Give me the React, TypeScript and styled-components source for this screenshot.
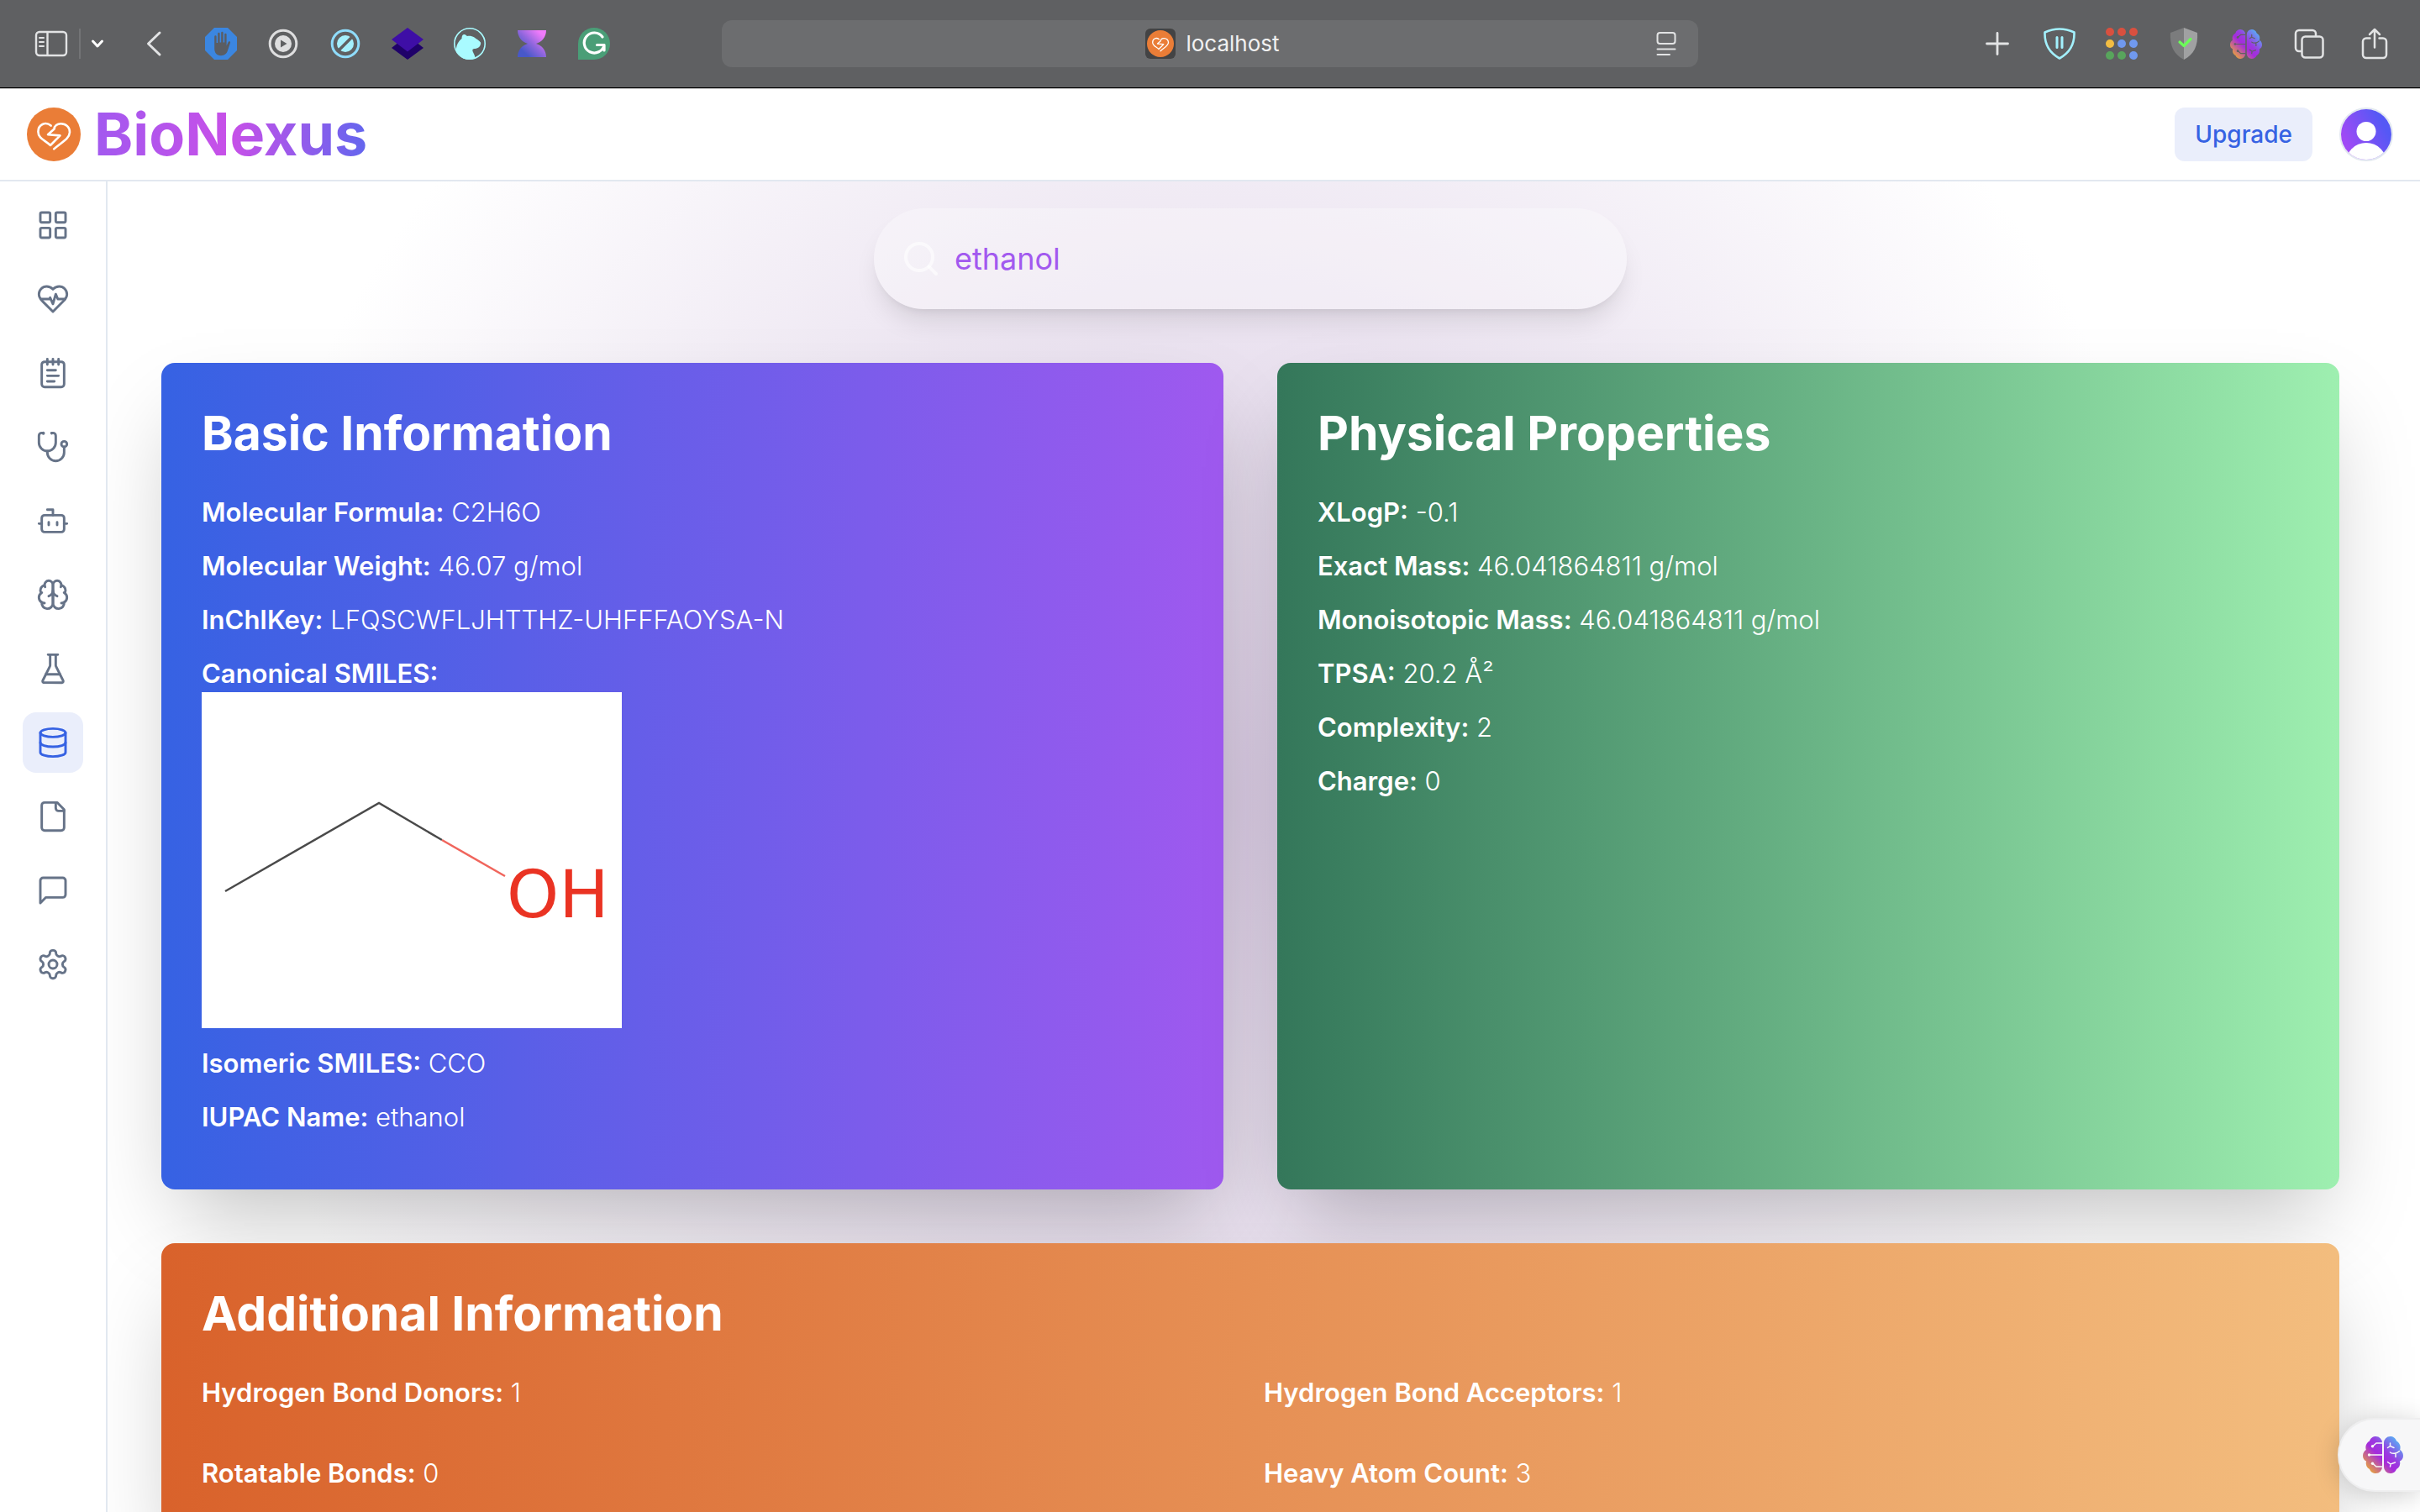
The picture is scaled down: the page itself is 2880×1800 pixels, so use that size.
import React from "react";
import styled, { createGlobalStyle } from "styled-components";

const GlobalStyle = createGlobalStyle`
  *, *::before, *::after { box-sizing: border-box; }
  html, body { margin: 0; padding: 0; }
  body {
    background: #ffffff;
    font-family: Inter, "Liberation Sans", sans-serif;
    -webkit-font-smoothing: antialiased;
  }
  button { font: inherit; border: 0; padding: 0; background: none; color: inherit; cursor: pointer; }
  svg { display: block; }
`;

const Shell = styled.div`
  display: flex;
  flex-direction: column;
  height: 100vh;
  overflow: hidden;
`;

/* ---------- browser chrome ---------- */

const BrowserBar = styled.div`
  display: grid;
  grid-template-columns: 1fr minmax(0, 1162px) 1fr;
  align-items: center;
  flex: none;
  height: 105px;
  padding: 0 32px;
  background: #5f6062;
  border-bottom: 1px solid #000000;
  color: #e2e3e4;
`;

const ToolGroup = styled.div<{ $end?: boolean }>`
  display: flex;
  align-items: center;
  justify-content: ${(p) => (p.$end ? "flex-end" : "flex-start")};
`;

const ExtensionRow = styled.div<{ $before?: number }>`
  display: flex;
  align-items: center;
  gap: 36px;
  margin-left: ${(p) => p.$before ?? 0}px;
`;

const ToolButton = styled.button<{ $width?: number; $before?: number }>`
  display: flex;
  align-items: center;
  justify-content: center;
  flex: none;
  width: ${(p) => p.$width ?? 38}px;
  height: 40px;
  margin-left: ${(p) => p.$before ?? 0}px;
`;

const ToolDivider = styled.span`
  width: 2px;
  height: 36px;
  margin: 0 12px;
  background: #737476;
`;

const AddressBar = styled.div`
  display: grid;
  grid-template-columns: 1fr auto 1fr;
  align-items: center;
  height: 56px;
  padding: 0 26px 0 32px;
  border-radius: 12px;
  background: #6c6d6f;
`;

const AddressText = styled.div`
  display: flex;
  align-items: center;
  grid-column: 2;
  gap: 12px;
  font-size: 26px;
  line-height: 32px;
  color: #f1f1f1;
`;

const Favicon = styled.span`
  display: flex;
  align-items: center;
  justify-content: center;
  width: 36px;
  height: 36px;
  border-radius: 6px;
  background: #434344;
`;

const ReaderButton = styled.button`
  justify-self: end;
`;

/* ---------- app header ---------- */

const Header = styled.header`
  display: flex;
  align-items: center;
  justify-content: space-between;
  flex: none;
  height: 111px;
  padding: 0 32px;
  background: #ffffff;
  border-top: 1px solid #c4c4c4;
  border-bottom: 2px solid #e2e8f0;
`;

const Brand = styled.a`
  display: flex;
  align-items: center;
  gap: 16px;
  text-decoration: none;
`;

const BrandName = styled.span`
  font-size: 70px;
  line-height: 80px;
  font-weight: 700;
  color: transparent;
  background: linear-gradient(to right, #a259ef, #c850e8 50%, #6366ee);
  -webkit-background-clip: text;
  background-clip: text;
`;

const Account = styled.div`
  display: flex;
  align-items: center;
  gap: 32px;
`;

const UpgradeButton = styled.button`
  height: 64px;
  padding: 0 24px;
  border-radius: 12px;
  background: #eaeefb;
  color: #3662e3;
  font-size: 28px;
  line-height: 40px;
  font-weight: 500;
`;

const AvatarButton = styled.button`
  width: 64px;
  height: 64px;
  border-radius: 50%;
`;

/* ---------- body ---------- */

const Body = styled.div`
  display: flex;
  flex: 1;
  min-height: 0;
`;

const Sidebar = styled.nav`
  display: flex;
  flex-direction: column;
  align-items: center;
  flex: none;
  gap: 16px;
  width: 128px;
  padding-top: 16px;
  background: #ffffff;
  border-right: 2px solid #e2e8f0;
`;

const NavLink = styled.a<{ $active?: boolean }>`
  display: flex;
  padding: 16px;
  border-radius: 16px;
  color: ${(p) => (p.$active ? "#3662e3" : "#667388")};
  background: ${(p) => (p.$active ? "#eaeefb" : "transparent")};
`;

const Main = styled.main`
  flex: 1;
  min-width: 0;
  overflow: hidden;
  padding: 32px 96px 0 64px;
  background: radial-gradient(circle 1180px at calc(50% - 64px) calc(50% - 56px), #d9cae3, #ffffff);
`;

const SearchBox = styled.label`
  display: flex;
  align-items: center;
  gap: 16px;
  max-width: 896px;
  height: 120px;
  margin: 0 auto 64px;
  padding: 0 32px;
  border-radius: 60px;
  background: rgba(255, 255, 255, 0.3);
  color: rgba(255, 255, 255, 0.6);
  box-shadow: 0 20px 30px -6px rgba(0, 0, 0, 0.1), 0 8px 12px -8px rgba(0, 0, 0, 0.1);
`;

const SearchInput = styled.input`
  flex: 1;
  min-width: 0;
  padding: 0;
  border: 0;
  outline: 0;
  background: transparent;
  font-family: inherit;
  font-size: 36px;
  line-height: 56px;
  color: #a259ef;
`;

const Cards = styled.div`
  display: grid;
  grid-template-columns: 1fr 1fr;
  gap: 64px;
`;

const Card = styled.section<{ $from: string; $to: string; $wide?: boolean }>`
  grid-column: ${(p) => (p.$wide ? "1 / -1" : "auto")};
  padding: 48px;
  border-radius: 16px;
  color: #ffffff;
  background: linear-gradient(to right, ${(p) => p.$from}, ${(p) => p.$to});
  box-shadow: 0 50px 100px -24px rgba(0, 0, 0, 0.25);
`;

const CardTitle = styled.h2`
  margin: 0 0 32px;
  font-size: 57px;
  line-height: 72px;
  font-weight: 700;
`;

const PropertyGrid = styled.div`
  display: grid;
  grid-template-columns: 1fr 1fr;
  gap: 32px;
`;

const Property = styled.div`
  margin-bottom: 12px;
  font-size: 31px;
  line-height: 52px;
  font-weight: 300;
`;

const PropertyLabel = styled.strong`
  font-weight: 600;
`;

const Structure = styled.svg`
  width: 500px;
  height: 400px;
  margin: -4px 0 16px;
  background: #ffffff;
  font-family: "DejaVu Sans", sans-serif;
  font-size: 79px;
  font-weight: 400;
`;

const AssistantButton = styled.button`
  position: fixed;
  right: 0;
  bottom: 24px;
  display: flex;
  align-items: center;
  width: 98px;
  height: 88px;
  padding-left: 28px;
  border: 2px solid #eeeeef;
  border-right: 0;
  border-radius: 44px 0 0 44px;
  background: #f7f7f8;
  box-shadow: 0 4px 30px rgba(0, 0, 0, 0.18);
`;

/* ---------- drawings ---------- */

const HeartMark = ({ size }: { size: number }) => (
  <svg width={size} height={size} viewBox="0 0 64 64" fill="none" aria-hidden="true">
    <circle cx="32" cy="32" r="32" fill="#ea7d37" />
    <path
      d="M28.6 21.6C22 16 13.4 20.5 13.4 28.8C13.4 36.8 21.5 38.8 28 45L39.5 33.4L25 32.2L32.6 25.6C32.6 22 36 19.2 40.5 19.2C46.5 19.2 51.2 23.5 51 29.5C50.6 37.5 40 42 32.2 49.4"
      stroke="#fff"
      strokeWidth="2.6"
      strokeLinecap="round"
      strokeLinejoin="round"
    />
  </svg>
);

const BrainMark = ({ id, width, height, trace }: { id: string; width: number; height: number; trace: string }) => (
  <svg width={width} height={height} viewBox="0 0 48 44" aria-hidden="true">
    <defs>
      <linearGradient id={id} gradientUnits="userSpaceOnUse" x1="6" y1="40" x2="42" y2="4">
        <stop offset="0" stopColor="#e8a33c" />
        <stop offset="0.42" stopColor="#a52bdc" />
        <stop offset="0.6" stopColor="#9a3be0" />
        <stop offset="1" stopColor="#57b0f5" />
      </linearGradient>
    </defs>
    <g fill={`url(#${id})`}>
      <path d="M15.5 0A7.5 7.5 0 0 1 23 7.5V36.5A7.5 7.5 0 0 1 15.5 44C12 44 9 42 8 39C5 37.5 3 34 4 29.5C1.5 28.5 0 26 0 23C0 20 1.5 17.5 3.8 16C2.5 11 4.5 7.5 8 5.5C9 2 12 0 15.5 0Z" />
      <path d="M32.5 0A7.5 7.5 0 0 0 25 7.5V36.5A7.5 7.5 0 0 0 32.5 44C36 44 39 42 40 39C43 37.5 45 34 44 29.5C46.5 28.5 48 26 48 23C48 20 46.5 17.5 44.2 16C45.5 11 43.5 7.5 40 5.5C39 2 36 0 32.5 0Z" />
    </g>
    <g fill="none" stroke={trace} strokeWidth="1.5" strokeLinecap="round">
      <path d="M23 8H16L12 11.5M23 22H8M23 36H16L12 32.5" />
      <path d="M32.5 8V11.5L29.5 13.5M32.5 11.5L37 13.5M32.5 19C35 21 40 21 43.5 17.5M39 21V24.5M29.5 30.5L33 33L38.5 31M33 33L32.5 36" />
    </g>
    <g fill={trace}>
      <circle cx="11.5" cy="11.8" r="1.7" />
      <circle cx="7.5" cy="22" r="1.7" />
      <circle cx="11.5" cy="32.3" r="1.7" />
    </g>
  </svg>
);

const NavIcon = ({ children }: { children: React.ReactNode }) => (
  <svg
    width="40"
    height="40"
    viewBox="0 0 24 24"
    fill="none"
    stroke="currentColor"
    strokeWidth="1.75"
    strokeLinecap="round"
    strokeLinejoin="round"
    aria-hidden="true"
  >
    {children}
  </svg>
);

const navItems: { label: string; active?: boolean; icon: React.ReactNode }[] = [
  {
    label: "Dashboard",
    icon: (
      <>
        <rect width="7" height="7" x="3" y="3" rx="1" />
        <rect width="7" height="7" x="14" y="3" rx="1" />
        <rect width="7" height="7" x="14" y="14" rx="1" />
        <rect width="7" height="7" x="3" y="14" rx="1" />
      </>
    ),
  },
  {
    label: "Health",
    icon: (
      <>
        <path d="M19 14c1.49-1.46 3-3.21 3-5.5A5.5 5.5 0 0 0 16.5 3c-1.76 0-3 .5-4.5 2-1.5-1.5-2.74-2-4.5-2A5.5 5.5 0 0 0 2 8.5c0 2.3 1.5 4.05 3 5.5l7 7Z" />
        <path d="M3.22 12H9.5l.5-1 2 4.5 2-7 1.5 3.5h5.27" />
      </>
    ),
  },
  {
    label: "Notes",
    icon: (
      <>
        <path d="M8 2v4M12 2v4M16 2v4" />
        <rect width="16" height="18" x="4" y="4" rx="2" />
        <path d="M8 10h6M8 14h8M8 18h5" />
      </>
    ),
  },
  {
    label: "Diagnosis",
    icon: (
      <>
        <path d="M4.8 2.3A.3.3 0 1 0 5 2H4a2 2 0 0 0-2 2v5a6 6 0 0 0 6 6 6 6 0 0 0 6-6V4a2 2 0 0 0-2-2h-1a.2.2 0 1 0 .3.3" />
        <path d="M8 15v1a6 6 0 0 0 6 6 6 6 0 0 0 6-6v-4" />
        <circle cx="20" cy="10" r="2" />
      </>
    ),
  },
  {
    label: "Assistant",
    icon: (
      <>
        <path d="M12 8V4H8" />
        <rect width="16" height="12" x="4" y="8" rx="2" />
        <path d="M2 14h2M20 14h2M15 13v2M9 13v2" />
      </>
    ),
  },
  {
    label: "Mind",
    icon: (
      <>
        <path d="M12 5a3 3 0 1 0-5.997.125 4 4 0 0 0-2.526 5.77 4 4 0 0 0 .556 6.588A4 4 0 1 0 12 18Z" />
        <path d="M12 5a3 3 0 1 1 5.997.125 4 4 0 0 1 2.526 5.77 4 4 0 0 1-.556 6.588A4 4 0 1 1 12 18Z" />
        <path d="M15 13a4.5 4.5 0 0 1-3-4 4.5 4.5 0 0 1-3 4" />
        <path d="M17.599 6.5a3 3 0 0 0 .399-1.375M6.003 5.125A3 3 0 0 0 6.401 6.5" />
        <path d="M3.477 10.896a4 4 0 0 1 .585-.396M19.938 10.5a4 4 0 0 1 .585.396" />
        <path d="M6 18a4 4 0 0 1-1.967-.516M19.967 17.484A4 4 0 0 1 18 18" />
      </>
    ),
  },
  {
    label: "Laboratory",
    icon: (
      <>
        <path d="M10 2v7.527a2 2 0 0 1-.211.896L4.72 20.55a1 1 0 0 0 .9 1.45h12.76a1 1 0 0 0 .9-1.45l-5.069-10.127A2 2 0 0 1 14 9.527V2" />
        <path d="M8.5 2h7M7 16h10" />
      </>
    ),
  },
  {
    label: "Compound database",
    active: true,
    icon: (
      <>
        <ellipse cx="12" cy="5" rx="9" ry="3" />
        <path d="M3 5V19A9 3 0 0 0 21 19V5" />
        <path d="M3 12A9 3 0 0 0 21 12" />
      </>
    ),
  },
  {
    label: "Documents",
    icon: (
      <>
        <path d="M15 2H6a2 2 0 0 0-2 2v16a2 2 0 0 0 2 2h12a2 2 0 0 0 2-2V7Z" />
        <path d="M14 2v4a2 2 0 0 0 2 2h4" />
      </>
    ),
  },
  {
    label: "Messages",
    icon: <path d="M21 15a2 2 0 0 1-2 2H7l-4 4V5a2 2 0 0 1 2-2h14a2 2 0 0 1 2 2z" />,
  },
  {
    label: "Settings",
    icon: (
      <>
        <path d="M12.22 2h-.44a2 2 0 0 0-2 2v.18a2 2 0 0 1-1 1.73l-.43.25a2 2 0 0 1-2 0l-.15-.08a2 2 0 0 0-2.73.73l-.22.38a2 2 0 0 0 .73 2.73l.15.1a2 2 0 0 1 1 1.72v.51a2 2 0 0 1-1 1.74l-.15.09a2 2 0 0 0-.73 2.73l.22.38a2 2 0 0 0 2.73.73l.15-.08a2 2 0 0 1 2 0l.43.25a2 2 0 0 1 1 1.73V20a2 2 0 0 0 2 2h.44a2 2 0 0 0 2-2v-.18a2 2 0 0 1 1-1.73l.43-.25a2 2 0 0 1 2 0l.15.08a2 2 0 0 0 2.73-.73l.22-.39a2 2 0 0 0-.73-2.73l-.15-.08a2 2 0 0 1-1-1.74v-.5a2 2 0 0 1 1-1.74l.15-.09a2 2 0 0 0 .73-2.73l-.22-.38a2 2 0 0 0-2.73-.73l-.15.08a2 2 0 0 1-2 0l-.43-.25a2 2 0 0 1-1-1.73V4a2 2 0 0 0-2-2z" />
        <circle cx="12" cy="12" r="3" />
      </>
    ),
  },
];

const extensions: { label: string; icon: React.ReactNode }[] = [
  {
    label: "Content blocker",
    icon: (
      <svg width="38" height="38" viewBox="0 0 38 38" aria-hidden="true">
        <path d="M11 0H27L38 11V27L27 38H11L0 27V11Z" fill="#3b86e0" />
        <path
          d="M11.2 21V10.5a1.2 1.2 0 0 1 2.4 0V18h1.6V7a1.2 1.2 0 0 1 2.4 0V17.5h1.6V6a1.2 1.2 0 0 1 2.4 0V17.500h1.6V8a1.2 1.2 0 0 1 2.4 0V21.5l1.8-4c.6-1.6 3.2-1.6 2.6.6L27 27c-1.2 4-4 6.200-8 6.200-5.500 0-7.800-4-7.800-8.200Z"
          fill="#5a5d63"
        />
      </svg>
    ),
  },
  {
    label: "Player",
    icon: (
      <svg width="36" height="36" viewBox="0 0 36 36" aria-hidden="true">
        <circle cx="18" cy="18" r="15.8" fill="none" stroke="#dededf" strokeWidth="3" />
        <circle cx="18" cy="18" r="10" fill="#dededf" />
        <path d="M15 13.5v9l7.5-4.5Z" fill="#5f6062" />
      </svg>
    ),
  },
  {
    label: "Tracker blocker",
    icon: (
      <svg width="36" height="36" viewBox="0 0 36 36" aria-hidden="true">
        <circle cx="18" cy="18" r="15.8" fill="none" stroke="#8fdcfb" strokeWidth="3" />
        <circle cx="18" cy="18" r="10" fill="#a5f0fd" />
        <path d="M10.5 25.5L25.5 10.5" stroke="#5f6062" strokeWidth="3.5" />
      </svg>
    ),
  },
  {
    label: "Stacks",
    icon: (
      <svg width="38" height="38" viewBox="0 0 38 38" aria-hidden="true">
        <path d="M0 24L19 9L38 24L19 38Z" fill="#1f0169" />
        <path d="M0 14L19 0L38 14L19 28.5Z" fill="#3e0ea6" />
      </svg>
    ),
  },
  {
    label: "Bear",
    icon: (
      <svg width="38" height="38" viewBox="0 0 38 38" aria-hidden="true">
        <circle cx="19" cy="19" r="18.2" fill="none" stroke="#a9fbff" strokeWidth="1.6" />
        <path
          d="M3 28C2.5 20 6 16 9.5 13C9.5 10 10.5 7.5 12.5 8C14 8 15 9.5 16 10C19 9.5 22 10 24.5 11.5C27 13.5 30 15 32 17.5C32.5 19.5 31.5 22 29.5 23.5C27 25.5 23.5 24.5 22.5 26C21.5 28.5 25.5 32 25.5 36.5C16 40 7 36.5 3 28Z"
          fill="#a9fbff"
        />
      </svg>
    ),
  },
  {
    label: "Hourglass",
    icon: (
      <svg width="34" height="34" viewBox="0 0 34 34" aria-hidden="true">
        <defs>
          <linearGradient id="hourglass" x1="0" y1="1" x2="1" y2="0">
            <stop offset="0.2" stopColor="#4858c8" />
            <stop offset="0.5" stopColor="#8f66dd" />
            <stop offset="0.85" stopColor="#f07bfb" />
          </linearGradient>
        </defs>
        <path d="M0 1H34C34 9 29 15 22 17C29 19 34 25 34 33H0C0 25 5 19 12 17C5 15 0 9 0 1Z" fill="url(#hourglass)" />
      </svg>
    ),
  },
  {
    label: "Grammar",
    icon: (
      <svg width="38" height="38" viewBox="0 0 38 38" aria-hidden="true">
        <path d="M19 0A19 19 0 1 1 19 38H0V19A19 19 0 0 1 19 0Z" fill="#4a9e77" />
        <path
          d="M29 11A12 12 0 1 0 31 20.500H22.500M31 20.500V27"
          fill="none"
          stroke="#fff"
          strokeWidth="3.2"
          strokeLinecap="round"
          strokeLinejoin="round"
        />
      </svg>
    ),
  },
];

const dotColors = ["#d9503f", "#d9503f", "#d9503f", "#f3bd42", "#7099ee", "#7099ee", "#58a55c", "#58a55c", "#7099ee"];

const BrowserChrome = () => (
  <BrowserBar>
    <ToolGroup>
      <ToolButton $width={42} $before={8} aria-label="Show sidebar">
        <svg width="40" height="32" viewBox="0 0 40 32" fill="none" stroke="currentColor" strokeWidth="2.4" aria-hidden="true">
          <rect x="2" y="2" width="36" height="28" rx="4" />
          <path d="M15.5 2V30" />
          <path d="M6 9H11M6 14H11M6 19H11" strokeWidth="2" strokeLinecap="round" />
        </svg>
      </ToolButton>
      <ToolDivider />
      <ToolButton $width={16} aria-label="Tab groups">
        <svg width="16" height="12" viewBox="0 0 16 12" fill="none" stroke="#fff" strokeWidth="3" strokeLinecap="round" strokeLinejoin="round" aria-hidden="true">
          <path d="M2.5 3L8 9L13.5 3" />
        </svg>
      </ToolButton>
      <ToolButton $width={22} $before={48} aria-label="Back">
        <svg width="20" height="32" viewBox="0 0 20 32" fill="none" stroke="currentColor" strokeWidth="3" strokeLinecap="round" strokeLinejoin="round" aria-hidden="true">
          <path d="M17 3L3.5 16L17 29" />
        </svg>
      </ToolButton>
      <ExtensionRow $before={50}>
        {extensions.map((item) => (
          <ToolButton key={item.label} aria-label={item.label}>
            {item.icon}
          </ToolButton>
        ))}
      </ExtensionRow>
    </ToolGroup>
    <AddressBar>
      <AddressText>
        <Favicon>
          <HeartMark size={32} />
        </Favicon>
        localhost
      </AddressText>
      <ReaderButton aria-label="Reader view">
        <svg width="24" height="30" viewBox="0 0 24 30" fill="none" stroke="currentColor" strokeWidth="2" strokeLinecap="round" aria-hidden="true">
          <rect x="1.5" y="2" width="21" height="13" rx="3" />
          <path d="M1.5 21.5H22.5M1.5 28H16" />
        </svg>
      </ReaderButton>
    </AddressBar>
    <ToolGroup $end>
      <ExtensionRow>
        <ToolButton aria-label="New tab">
          <svg width="28" height="28" viewBox="0 0 28 28" fill="none" stroke="currentColor" strokeWidth="2.8" strokeLinecap="round" aria-hidden="true">
            <path d="M14 1.5V26.5M1.5 14H26.5" />
          </svg>
        </ToolButton>
        <ToolButton aria-label="Privacy shield">
          <svg width="38" height="38" viewBox="0 0 38 38" fill="none" stroke="#a3f1fd" strokeLinecap="round" strokeLinejoin="round" aria-hidden="true">
            <path d="M19 1.5C25 1.5 31 3 36.5 5.5C37 20 31 30 19 36.5C7 30 1 20 1.5 5.5C7 3 13 1.5 19 1.5Z" strokeWidth="2.6" />
            <path d="M16 11.5V23.5M22 11.5V23.5" strokeWidth="3" />
          </svg>
        </ToolButton>
        <ToolButton aria-label="Apps">
          <svg width="38" height="38" viewBox="0 0 38 38" aria-hidden="true">
            {dotColors.map((color, i) => (
              <circle key={i} cx={5 + (i % 3) * 14} cy={5 + Math.floor(i / 3) * 14} r="5" fill={color} />
            ))}
          </svg>
        </ToolButton>
        <ToolButton aria-label="Security check">
          <svg width="34" height="38" viewBox="0 0 34 38" aria-hidden="true">
            <path d="M17 0L1 6C0 21 5 32 17 38Z" fill="#7b7c7d" />
            <path d="M17 0L33 6C34 21 29 32 17 38Z" fill="#a0a1a2" />
            <path d="M12 17L17 21.5L25 13.5" fill="none" stroke="#6bfb58" strokeWidth="3.2" strokeLinecap="round" strokeLinejoin="round" />
          </svg>
        </ToolButton>
        <ToolButton aria-label="Brain extension">
          <BrainMark id="brain-toolbar" width={38} height={35} trace="#5f6062" />
        </ToolButton>
        <ToolButton $width={40} aria-label="Tab overview">
          <svg width="36" height="36" viewBox="0 0 36 36" fill="none" stroke="currentColor" strokeWidth="2.5" aria-hidden="true">
            <rect x="9.5" y="9.5" width="25" height="25" rx="4" />
            <path d="M9 27H6A4 4 0 0 1 2 23V6A4 4 0 0 1 6 2H22A4 4 0 0 1 26 6V9" />
          </svg>
        </ToolButton>
        <ToolButton $width={44} aria-label="Share">
          <svg width="32" height="38" viewBox="0 0 32 38" fill="none" stroke="currentColor" strokeWidth="2.5" strokeLinecap="round" strokeLinejoin="round" aria-hidden="true">
            <path d="M10.5 12.5H6A4 4 0 0 0 2 16.5V32A4 4 0 0 0 6 36H26A4 4 0 0 0 30 32V16.5A4 4 0 0 0 26 12.5H21.5" />
            <path d="M16 23.5V2M10 8L16 2L22 8" />
          </svg>
        </ToolButton>
      </ExtensionRow>
    </ToolGroup>
  </BrowserBar>
);

const Avatar = () => (
  <svg width="64" height="64" viewBox="0 0 64 64" aria-hidden="true">
    <defs>
      <linearGradient id="avatar" x1="0" y1="0.8" x2="1" y2="0.3">
        <stop offset="0.15" stopColor="#a04af5" />
        <stop offset="0.85" stopColor="#5558f5" />
      </linearGradient>
      <clipPath id="avatar-clip">
        <circle cx="32" cy="32" r="30" />
      </clipPath>
    </defs>
    <circle cx="32" cy="32" r="31" fill="#fff" stroke="#e2e8f0" strokeWidth="2" />
    <g clipPath="url(#avatar-clip)">
      <rect width="64" height="64" fill="url(#avatar)" />
      <circle cx="32" cy="28.5" r="11.5" fill="#fff" />
      <circle cx="32" cy="66.5" r="24.5" fill="#fff" />
    </g>
  </svg>
);

const EthanolStructure = () => (
  <Structure viewBox="0 0 500 400" role="img" aria-label="Ethanol structure">
    <g fill="none" strokeWidth="2.5">
      <path d="M28 237L211 132L286 176" stroke="#4a4a4a" />
      <path d="M286 176L361 219" stroke="#f0655c" />
    </g>
    <text x="363" y="268" fill="#ea3323">
      OH
    </text>
  </Structure>
);

const Row = ({ label, value, children }: { label: string; value?: string; children?: React.ReactNode }) => (
  <Property>
    <PropertyLabel>{label}:</PropertyLabel> {value}
    {children}
  </Property>
);

export default function App() {
  const [query, setQuery] = React.useState("ethanol");

  return (
    <Shell>
      <GlobalStyle />
      <BrowserChrome />
      <Header>
        <Brand href="#">
          <HeartMark size={64} />
          <BrandName>BioNexus</BrandName>
        </Brand>
        <Account>
          <UpgradeButton>Upgrade</UpgradeButton>
          <AvatarButton aria-label="Account">
            <Avatar />
          </AvatarButton>
        </Account>
      </Header>
      <Body>
        <Sidebar aria-label="Main">
          {navItems.map((item) => (
            <NavLink key={item.label} href="#" aria-label={item.label} $active={item.active}>
              <NavIcon>{item.icon}</NavIcon>
            </NavLink>
          ))}
        </Sidebar>
        <Main>
          <SearchBox>
            <svg width="48" height="48" viewBox="0 0 24 24" fill="none" stroke="currentColor" strokeWidth="2" strokeLinecap="round" aria-hidden="true">
              <circle cx="11" cy="11" r="8" />
              <path d="M21 21L16.7 16.7" />
            </svg>
            <SearchInput aria-label="Search compounds" value={query} onChange={(e) => setQuery(e.target.value)} />
          </SearchBox>
          <Cards>
            <Card $from="#3662e3" $to="#9f59ef">
              <CardTitle>Basic Information</CardTitle>
              <Row label="Molecular Formula" value="C2H6O" />
              <Row label="Molecular Weight" value="46.07 g/mol" />
              <Row label="InChIKey" value="LFQSCWFLJHTTHZ-UHFFFAOYSA-N" />
              <Row label="Canonical SMILES">
                <EthanolStructure />
              </Row>
              <Row label="Isomeric SMILES" value="CCO" />
              <Row label="IUPAC Name" value="ethanol" />
            </Card>
            <Card $from="#34775a" $to="#9eefb0">
              <CardTitle>Physical Properties</CardTitle>
              <Row label="XLogP" value="-0.1" />
              <Row label="Exact Mass" value="46.041864811 g/mol" />
              <Row label="Monoisotopic Mass" value="46.041864811 g/mol" />
              <Row label="TPSA" value="20.2 Å²" />
              <Row label="Complexity" value="2" />
              <Row label="Charge" value="0" />
            </Card>
            <Card $from="#d9622b" $to="#f3bd7e" $wide>
              <CardTitle>Additional Information</CardTitle>
              <PropertyGrid>
                <Row label="Hydrogen Bond Donors" value="1" />
                <Row label="Hydrogen Bond Acceptors" value="1" />
                <Row label="Rotatable Bonds" value="0" />
                <Row label="Heavy Atom Count" value="3" />
              </PropertyGrid>
            </Card>
          </Cards>
        </Main>
      </Body>
      <AssistantButton aria-label="Open assistant">
        <BrainMark id="brain-assistant" width={48} height={44} trace="#f7f7f8" />
      </AssistantButton>
    </Shell>
  );
}
